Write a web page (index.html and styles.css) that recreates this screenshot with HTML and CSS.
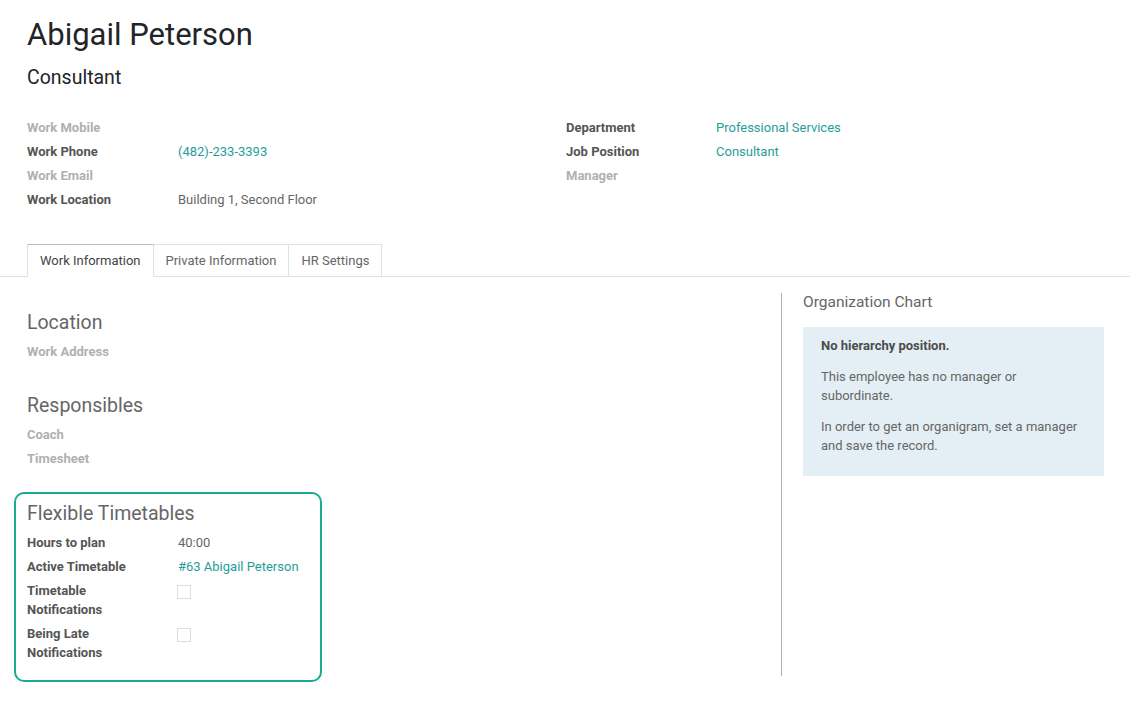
FILE: index.html
```html
<!DOCTYPE html>
<html lang="en">
<head>
    <meta charset="UTF-8">
    <meta name="viewport" content="width=device-width, initial-scale=1.0">
    <title>Abigail Peterson</title>
    <link rel="stylesheet" href="styles.css">
</head>
<body>
    <div class="sheet">
        <div class="title">
            <h1 class="name">Abigail Peterson</h1>
            <h2 class="job">Consultant</h2>
        </div>
        <div class="header-groups">
            <div class="group">
                <div class="row"><span class="label empty">Work Mobile</span><span class="value"></span></div>
                <div class="row"><span class="label">Work Phone</span><span class="value link">(482)-233-3393</span></div>
                <div class="row"><span class="label empty">Work Email</span><span class="value"></span></div>
                <div class="row"><span class="label">Work Location</span><span class="value">Building 1, Second Floor</span></div>
            </div>
            <div class="group second-group">
                <div class="row"><span class="label">Department</span><span class="value link">Professional Services</span></div>
                <div class="row"><span class="label">Job Position</span><span class="value link">Consultant</span></div>
                <div class="row"><span class="label empty">Manager</span><span class="value"></span></div>
            </div>
        </div>
    </div>

    <ul class="tabs">
        <li class="tab active">Work Information</li>
        <li class="tab">Private Information</li>
        <li class="tab">HR Settings</li>
    </ul>

    <div class="page">
        <div class="left">
            <h3 class="separator">Location</h3>
            <div class="row"><span class="label empty">Work Address</span><span class="value"></span></div>

            <h3 class="separator second">Responsibles</h3>
            <div class="row"><span class="label empty">Coach</span><span class="value"></span></div>
            <div class="row"><span class="label empty">Timesheet</span><span class="value"></span></div>

            <div class="highlight">
                <h3 class="separator flex">Flexible Timetables</h3>
                <div class="row"><span class="label narrow">Hours to plan</span><span class="value">40:00</span></div>
                <div class="row"><span class="label narrow">Active Timetable</span><span class="value link">#63 Abigail Peterson</span></div>
                <div class="row"><span class="label narrow">Timetable Notifications</span><span class="value"><span class="check"></span></span></div>
                <div class="row"><span class="label narrow">Being Late Notifications</span><span class="value"><span class="check"></span></span></div>
            </div>
        </div>

        <div class="right">
            <h4 class="chart-title">Organization Chart</h4>
            <div class="info">
                <p class="strong">No hierarchy position.</p>
                <p>This employee has no manager or subordinate.</p>
                <p>In order to get an organigram, set a manager and save the record.</p>
            </div>
        </div>
    </div>
</body>
</html>
```

FILE: styles.css
```css
body{
    margin: 0;
    background-color: white;
    font-family: Roboto, "Noto Sans", sans-serif;
    font-size: 13px;
    color: #666666;
}
.sheet{
    padding: 16px 0 0 27px;
}
.name{
    margin: 0;
    font-size: 31px;
    line-height: 38px;
    font-weight: 400;
    color: #212529;
}
.job{
    margin: 12px 0 0 0;
    font-size: 19.5px;
    line-height: 24px;
    font-weight: 400;
    color: #212529;
}
.header-groups{
    display: flex;
    margin-top: 25px;
}
.group{
    width: 539px;
}
.row{
    display: flex;
    padding: 2.5px 0;
    line-height: 19px;
}
.label{
    width: 151px;
    flex-shrink: 0;
    font-weight: bold;
    color: #555555;
}
.second-group .label{
    width: 150px;
}
.label.empty{
    color: #b0b0b0;
}
.label.narrow{
    width: 135px;
    padding-right: 16px;
}
.value{
    color: #666666;
}
.link{
    color: #1f9e99;
}
.tabs{
    display: flex;
    list-style: none;
    margin: 33px 0 0 0;
    padding: 0 0 0 27px;
    border-bottom: 1px solid #dee2e6;
}
.tab{
    padding: 0 12px;
    height: 31px;
    line-height: 31px;
    border: 1px solid #dee2e6;
    border-bottom: none;
    margin-bottom: -1px;
    color: #666666;
    background-color: white;
}
.tab + .tab{
    border-left: none;
}
.tab.active{
    color: #444444;
    border-top-color: #c8b6c3;
    border-bottom: 1px solid white;
}
.page{
    display: flex;
    align-items: flex-start;
    padding: 16px 0 0 27px;
}
.left{
    width: 754px;
}
.separator{
    margin: 18px 0 4px 0;
    font-size: 19.5px;
    line-height: 24px;
    font-weight: 400;
    color: #666666;
}
.separator.second{
    margin-top: 31px;
}
.highlight{
    width: 282px;
    margin: 22px 0 0 -13px;
    padding: 7px 11px 16px 11px;
    border: 2px solid #1dab8e;
    border-radius: 10px;
}
.separator.flex{
    margin-top: 1px;
}
.check{
    display: inline-block;
    width: 12px;
    height: 12px;
    margin: 4px 0 0 -1px;
    border: 1px solid #dddddd;
    background-color: white;
    vertical-align: top;
}
.right{
    width: 301px;
    height: 383px;
    padding-left: 21px;
    border-left: 1px solid #b0b0b0;
}
.chart-title{
    margin: 0 0 15px 0;
    font-size: 15.5px;
    line-height: 19px;
    font-weight: 400;
    color: #666666;
}
.info{
    padding: 9px 18px 9px 18px;
    background-color: #e3eff4;
    line-height: 19px;
}
.info p{
    margin: 0 0 12px 0;
}
.info .strong{
    font-weight: bold;
    color: #4c4c4c;
}
```
